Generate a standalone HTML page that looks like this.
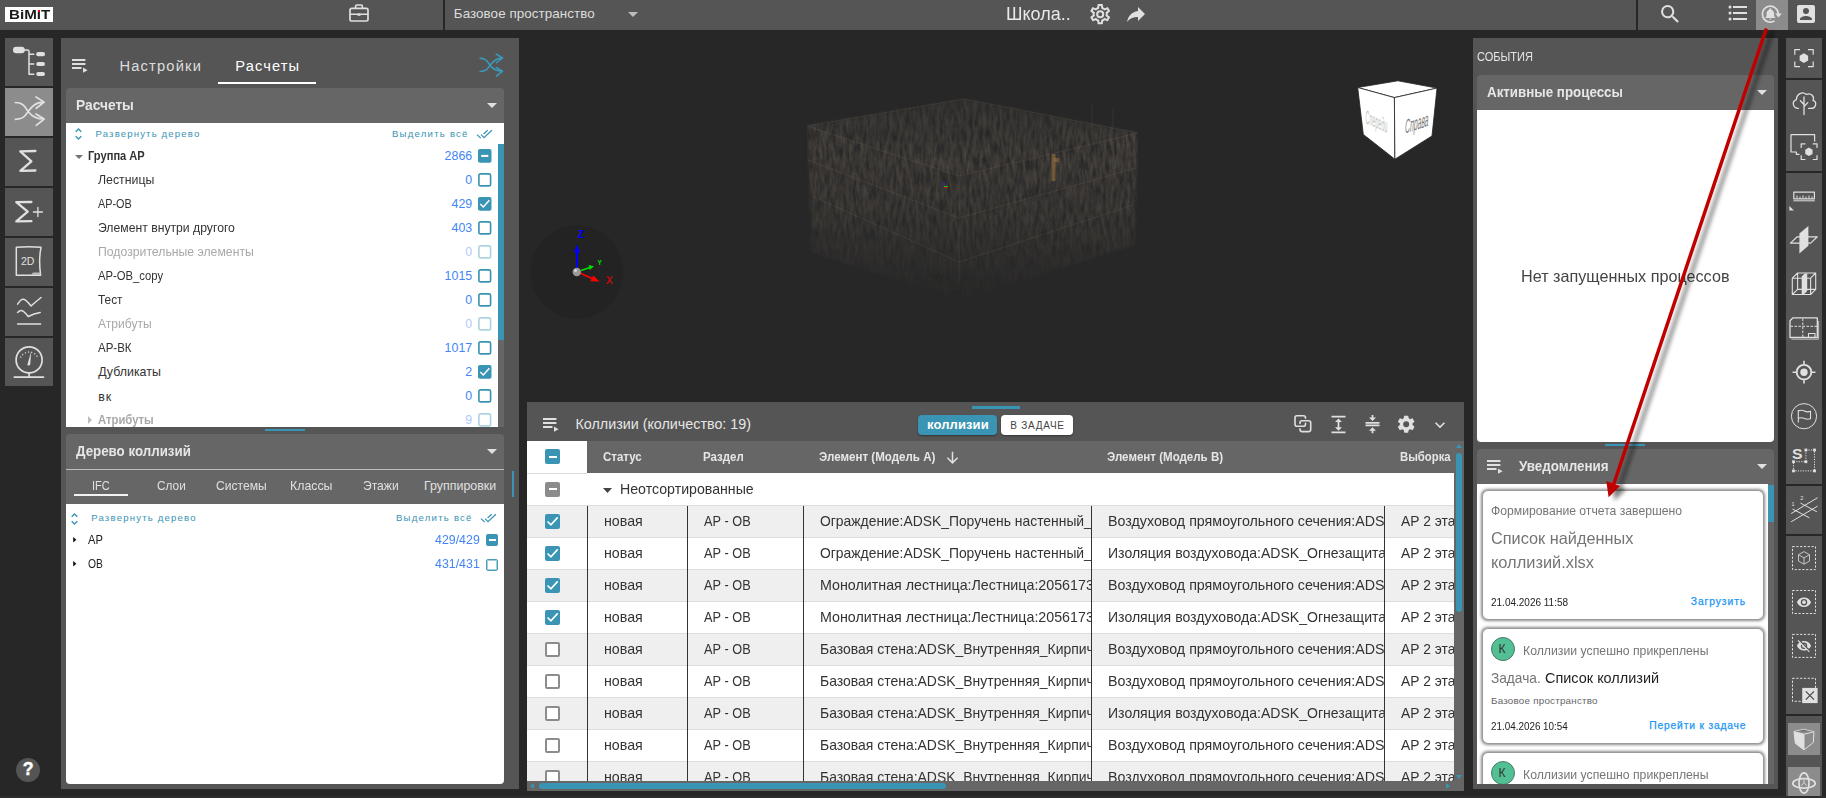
<!DOCTYPE html>
<html lang="ru">
<head>
<meta charset="utf-8">
<title>BIMIT</title>
<style>
*{box-sizing:border-box;margin:0;padding:0}
html,body{width:1826px;height:798px;overflow:hidden;background:#272727}
body{position:relative;font-family:"Liberation Sans",sans-serif;color:#333;font-size:12px}
.a{position:absolute}
.t{position:absolute;white-space:nowrap;line-height:1}
.tc{position:absolute;white-space:nowrap;line-height:1;overflow:hidden}
svg{position:absolute;overflow:visible}
.ic{fill:none;stroke:#e0e0e0;stroke-width:1.6;stroke-linecap:round;stroke-linejoin:round}
.icf{fill:#e0e0e0;stroke:none}
.tri{position:absolute;width:0;height:0;border-left:5px solid transparent;border-right:5px solid transparent;border-top:5px solid #e0e0e0}
.cb{position:absolute;border:2px solid #3a94b3;border-radius:2px;background:#fff}
.cbf{position:absolute;border-radius:2px;background:#3a94b3}
</style>
</head>
<body>
<div class="a" style="left:0px;top:0px;width:1826px;height:30px;background:#555;"></div>
<div class="a" style="left:5px;top:7px;width:48px;height:15px;background:#fff;"></div>
<div class="t" style="left:9.00px;top:9.00px;font-size:12.50px;color:#1a1a1a;font-weight:bold;transform:scaleX(1.2140);transform-origin:0 0;">BiMiT</div>
<div class="a" style="left:38.1px;top:10.1px;width:2.1px;height:2px;background:#f00000;"></div>
<div class="a" style="left:443px;top:0px;width:2px;height:30px;background:#272727;"></div>
<div class="t" style="left:453.80px;top:7.00px;font-size:13.40px;color:#ddd;letter-spacing:0.068px;">Базовое пространство</div>
<div class="tri" style="left:628px;top:12px;border-top-color:#bdbdbd"></div>
<div class="t" style="left:1006.30px;top:5.00px;font-size:18.50px;color:#e8e8e8;transform:scaleX(0.9729);transform-origin:0 0;">Школа..</div>
<div class="a" style="left:1636px;top:0px;width:2px;height:30px;background:#272727;"></div>
<div class="a" style="left:1756px;top:0px;width:32px;height:30px;background:#8c8c8c;"></div>
<div class="a" style="left:0px;top:796px;width:1826px;height:2px;background:#2d2d2d;"></div>
<div class="a" style="left:5px;top:38px;width:48px;height:48px;background:#555;"></div>
<div class="a" style="left:5px;top:88px;width:48px;height:48px;background:#8c8c8c;"></div>
<div class="a" style="left:5px;top:138px;width:48px;height:48px;background:#555;"></div>
<div class="a" style="left:5px;top:188px;width:48px;height:48px;background:#555;"></div>
<div class="a" style="left:5px;top:238px;width:48px;height:48px;background:#555;"></div>
<div class="a" style="left:5px;top:288px;width:48px;height:48px;background:#555;"></div>
<div class="a" style="left:5px;top:338px;width:48px;height:48px;background:#555;"></div>
<div class="a" style="left:16px;top:758px;width:24px;height:24px;border-radius:12px;background:#555"></div>
<div class="t" style="left:22.70px;top:761.00px;font-size:17.80px;color:#fff;font-weight:bold;-webkit-text-stroke:0.4px #fff;">?</div>
<div class="a" style="left:61px;top:38px;width:458px;height:751px;background:#555;"></div>
<svg style="left:72px;top:59px" width="16" height="14" viewBox="0 0 16 14"><path d="M0 1h13.4M0 5h13.4M0 9h9.5" stroke="#e0e0e0" stroke-width="1.8" fill="none"/><path d="M11 8.6v5.2l4.6-2.6z" fill="#e0e0e0"/></svg>
<div class="t" style="left:119.50px;top:59.00px;font-size:14.70px;color:#ddd;letter-spacing:1.165px;">Настройки</div>
<div class="t" style="left:235.30px;top:59.00px;font-size:14.70px;color:#fff;letter-spacing:1.080px;">Расчеты</div>
<div class="a" style="left:218px;top:82px;width:98px;height:2px;background:#fff;"></div>
<div class="a" style="left:66px;top:88px;width:438px;height:35px;background:#666;border-radius:4px 4px 0 0"></div>
<div class="t" style="left:76.00px;top:98.00px;font-size:14.40px;color:#e6e6e6;font-weight:bold;transform:scaleX(0.9556);transform-origin:0 0;">Расчеты</div>
<div class="tri" style="left:487px;top:103px"></div>
<div class="a" style="left:66px;top:123px;width:438px;height:21px;background:#fff;"></div>
<div class="a" style="left:66px;top:144px;width:432px;height:283px;background:#fff;"></div>
<div class="a" style="left:498px;top:144px;width:6px;height:283px;background:#666;"></div>
<div class="a" style="left:498px;top:144px;width:6px;height:196px;background:#3a94b3;"></div>
<div class="t" style="left:95.50px;top:129.00px;font-size:9.60px;color:#3a94b3;letter-spacing:1.143px;">Развернуть дерево</div>
<div class="t" style="left:392.00px;top:129.00px;font-size:9.60px;color:#3a94b3;letter-spacing:1.219px;">Выделить всё</div>
<svg style="left:74px;top:127px" width="9" height="14" viewBox="0 0 9 14"><path d="M1.700 4.700L4.500 2L7.300 4.700M1.700 9.300L4.500 12L7.300 9.300" fill="none" stroke="#3a94b3" stroke-width="1.400"/></svg>
<svg style="left:476px;top:128px" width="16" height="11" viewBox="0 0 16 11"><path d="M1 6.600L4.700 10.100M5 6.600L8 9.600L15.900 2.300M7.600 6L11.700 2.300" fill="none" stroke="#3a94b3" stroke-width="1.250"/></svg>
<div class="a" style="left:66px;top:123px;width:432px;height:304px;overflow:hidden">
<div class="t" style="left:22.20px;top:27.00px;font-size:12.40px;color:#333;font-weight:bold;transform:scaleX(0.8957);transform-origin:0 0;">Группа АР</div>
<div class="t" style="left:378.61px;top:27.00px;font-size:12.40px;color:#4285f4;">2866</div>
<svg style="left:412.4px;top:26px" width="13.500" height="13.800" viewBox="0 0 13.500 13.800"><rect width="13.500" height="13.800" rx="2" fill="#3a94b3"/><rect x="3.200" y="5.900" width="7.100" height="2" fill="#fff"/></svg>
<div class="t" style="left:32.20px;top:51.00px;font-size:12.40px;color:#333;transform:scaleX(0.9947);transform-origin:0 0;">Лестницы</div>
<div class="t" style="left:399.30px;top:51.00px;font-size:12.40px;color:#4285f4;">0</div>
<svg style="left:412.4px;top:50.4px;opacity:1" width="13.500" height="13.800" viewBox="0 0 13.500 13.800"><rect x="0.900" y="0.900" width="11.700" height="12" rx="1.500" fill="#fff" stroke="#3a94b3" stroke-width="1.650"/></svg>
<div class="t" style="left:32.20px;top:75.00px;font-size:12.40px;color:#333;transform:scaleX(0.8759);transform-origin:0 0;">АР-ОВ</div>
<div class="t" style="left:385.51px;top:75.00px;font-size:12.40px;color:#4285f4;">429</div>
<svg style="left:412.4px;top:74.4px" width="13.500" height="13.800" viewBox="0 0 13.500 13.800"><rect width="13.500" height="13.800" rx="2" fill="#3a94b3"/><path d="M2.300 7L5.300 10L11.400 3.300" fill="none" stroke="#fff" stroke-width="1.450"/></svg>
<div class="t" style="left:32.20px;top:99.00px;font-size:12.40px;color:#333;transform:scaleX(0.9849);transform-origin:0 0;">Элемент внутри другого</div>
<div class="t" style="left:385.51px;top:99.00px;font-size:12.40px;color:#4285f4;">403</div>
<svg style="left:412.4px;top:98.4px;opacity:1" width="13.500" height="13.800" viewBox="0 0 13.500 13.800"><rect x="0.900" y="0.900" width="11.700" height="12" rx="1.500" fill="#fff" stroke="#3a94b3" stroke-width="1.650"/></svg>
<div class="t" style="left:32.20px;top:123.00px;font-size:12.40px;color:#a8a8a8;transform:scaleX(0.9873);transform-origin:0 0;">Подозрительные элементы</div>
<div class="t" style="left:399.30px;top:123.00px;font-size:12.40px;color:#aecbfa;">0</div>
<svg style="left:412.4px;top:122.4px;opacity:0.4" width="13.500" height="13.800" viewBox="0 0 13.500 13.800"><rect x="0.900" y="0.900" width="11.700" height="12" rx="1.500" fill="#fff" stroke="#3a94b3" stroke-width="1.650"/></svg>
<div class="t" style="left:32.20px;top:147.00px;font-size:12.40px;color:#333;transform:scaleX(0.9083);transform-origin:0 0;">АР-ОВ_copy</div>
<div class="t" style="left:378.61px;top:147.00px;font-size:12.40px;color:#4285f4;">1015</div>
<svg style="left:412.4px;top:146.4px;opacity:1" width="13.500" height="13.800" viewBox="0 0 13.500 13.800"><rect x="0.900" y="0.900" width="11.700" height="12" rx="1.500" fill="#fff" stroke="#3a94b3" stroke-width="1.650"/></svg>
<div class="t" style="left:32.20px;top:171.00px;font-size:12.40px;color:#333;transform:scaleX(0.9550);transform-origin:0 0;">Тест</div>
<div class="t" style="left:399.30px;top:171.00px;font-size:12.40px;color:#4285f4;">0</div>
<svg style="left:412.4px;top:170.4px;opacity:1" width="13.500" height="13.800" viewBox="0 0 13.500 13.800"><rect x="0.900" y="0.900" width="11.700" height="12" rx="1.500" fill="#fff" stroke="#3a94b3" stroke-width="1.650"/></svg>
<div class="t" style="left:32.20px;top:195.00px;font-size:12.40px;color:#a8a8a8;transform:scaleX(0.9742);transform-origin:0 0;">Атрибуты</div>
<div class="t" style="left:399.30px;top:195.00px;font-size:12.40px;color:#aecbfa;">0</div>
<svg style="left:412.4px;top:194.4px;opacity:0.4" width="13.500" height="13.800" viewBox="0 0 13.500 13.800"><rect x="0.900" y="0.900" width="11.700" height="12" rx="1.500" fill="#fff" stroke="#3a94b3" stroke-width="1.650"/></svg>
<div class="t" style="left:32.20px;top:219.00px;font-size:12.40px;color:#333;transform:scaleX(0.9263);transform-origin:0 0;">АР-ВК</div>
<div class="t" style="left:378.61px;top:219.00px;font-size:12.40px;color:#4285f4;">1017</div>
<svg style="left:412.4px;top:218.4px;opacity:1" width="13.500" height="13.800" viewBox="0 0 13.500 13.800"><rect x="0.900" y="0.900" width="11.700" height="12" rx="1.500" fill="#fff" stroke="#3a94b3" stroke-width="1.650"/></svg>
<div class="t" style="left:32.20px;top:243.00px;font-size:12.40px;color:#333;letter-spacing:0.009px;">Дубликаты</div>
<div class="t" style="left:399.30px;top:243.00px;font-size:12.40px;color:#4285f4;">2</div>
<svg style="left:412.4px;top:242.4px" width="13.500" height="13.800" viewBox="0 0 13.500 13.800"><rect width="13.500" height="13.800" rx="2" fill="#3a94b3"/><path d="M2.300 7L5.300 10L11.400 3.300" fill="none" stroke="#fff" stroke-width="1.450"/></svg>
<div class="t" style="left:32.20px;top:268.00px;font-size:12.40px;color:#333;letter-spacing:1.087px;">вк</div>
<div class="t" style="left:399.30px;top:267.00px;font-size:12.40px;color:#4285f4;">0</div>
<svg style="left:412.4px;top:266.4px;opacity:1" width="13.500" height="13.800" viewBox="0 0 13.500 13.800"><rect x="0.900" y="0.900" width="11.700" height="12" rx="1.500" fill="#fff" stroke="#3a94b3" stroke-width="1.650"/></svg>
<div class="t" style="left:32.20px;top:291.00px;font-size:12.40px;color:#a8a8a8;font-weight:bold;transform:scaleX(0.9108);transform-origin:0 0;">Атрибуты</div>
<div class="t" style="left:399.30px;top:291.00px;font-size:12.40px;color:#aecbfa;">9</div>
<svg style="left:412.4px;top:290.4px;opacity:0.4" width="13.500" height="13.800" viewBox="0 0 13.500 13.800"><rect x="0.900" y="0.900" width="11.700" height="12" rx="1.500" fill="#fff" stroke="#3a94b3" stroke-width="1.650"/></svg>
<svg style="left:8.8px;top:31.5px" width="8" height="4" viewBox="0 0 8 4"><path d="M0 0h8l-4 4z" fill="#757575"/></svg>
<svg style="left:21.5px;top:293px" width="4" height="8" viewBox="0 0 4 8"><path d="M0 0v8l4-4z" fill="#bdbdbd"/></svg>
</div>
<div class="a" style="left:265px;top:429px;width:40px;height:2px;background:#3a94b3;"></div>
<div class="a" style="left:66px;top:434px;width:438px;height:35px;background:#666;border-radius:4px 4px 0 0"></div>
<div class="t" style="left:76.00px;top:444.00px;font-size:14.40px;color:#e6e6e6;font-weight:bold;transform:scaleX(0.9253);transform-origin:0 0;">Дерево коллизий</div>
<div class="tri" style="left:487px;top:449px"></div>
<div class="a" style="left:66px;top:469px;width:438px;height:1px;background:#bdbdbd;"></div>
<div class="a" style="left:66px;top:470px;width:438px;height:34px;background:#666;"></div>
<div class="t" style="left:92.00px;top:480.00px;font-size:12.40px;color:#e0e0e0;transform:scaleX(0.8861);transform-origin:0 0;">IFC</div>
<div class="t" style="left:156.70px;top:480.00px;font-size:12.40px;color:#e0e0e0;transform:scaleX(0.9551);transform-origin:0 0;">Слои</div>
<div class="t" style="left:215.70px;top:480.00px;font-size:12.40px;color:#e0e0e0;transform:scaleX(0.9758);transform-origin:0 0;">Системы</div>
<div class="t" style="left:289.70px;top:480.00px;font-size:12.40px;color:#e0e0e0;transform:scaleX(0.9961);transform-origin:0 0;">Классы</div>
<div class="t" style="left:363.20px;top:480.00px;font-size:12.40px;color:#e0e0e0;transform:scaleX(0.9762);transform-origin:0 0;">Этажи</div>
<div class="t" style="left:423.90px;top:480.00px;font-size:12.40px;color:#e0e0e0;letter-spacing:0.034px;">Группировки</div>
<div class="a" style="left:74px;top:494px;width:54px;height:2px;background:#f2f2f2;"></div>
<div class="a" style="left:512px;top:471px;width:2px;height:26px;background:#3a94b3;"></div>
<div class="a" style="left:66px;top:504px;width:438px;height:280px;background:#fff;border-radius:0 0 4px 4px"></div>
<div class="t" style="left:91.20px;top:513.00px;font-size:9.60px;color:#3a94b3;letter-spacing:1.187px;">Развернуть дерево</div>
<div class="t" style="left:396.00px;top:513.00px;font-size:9.60px;color:#3a94b3;letter-spacing:1.219px;">Выделить всё</div>
<svg style="left:69.5px;top:511.5px" width="9" height="14" viewBox="0 0 9 14"><path d="M1.700 4.700L4.500 2L7.300 4.700M1.700 9.300L4.500 12L7.300 9.300" fill="none" stroke="#3a94b3" stroke-width="1.400"/></svg>
<svg style="left:480px;top:511.700px" width="16" height="11" viewBox="0 0 16 11"><path d="M1 6.600L4.700 10.100M5 6.600L8 9.600L15.900 2.300M7.600 6L11.700 2.300" fill="none" stroke="#3a94b3" stroke-width="1.250"/></svg>
<div class="t" style="left:88.30px;top:534.00px;font-size:12.40px;color:#222;transform:scaleX(0.9008);transform-origin:0 0;">АР</div>
<div class="t" style="left:435.00px;top:534.00px;font-size:12.40px;color:#4285f4;transform:scaleX(0.9995);transform-origin:0 0;">429/429</div>
<div class="cbf" style="left:486.3px;top:534.3px;width:12px;height:12px;background:#3a94b3"></div>
<div class="a" style="left:489.069px;top:539.3px;width:6.46154px;height:2px;background:#fff"></div>
<svg style="left:72.700px;top:537.2px" width="3.600" height="5.600" viewBox="0 0 4 7"><path d="M0 0v7l4-3.500z" fill="#111"/></svg>
<div class="t" style="left:88.30px;top:558.00px;font-size:12.40px;color:#222;transform:scaleX(0.8317);transform-origin:0 0;">ОВ</div>
<div class="t" style="left:435.00px;top:558.00px;font-size:12.40px;color:#4285f4;transform:scaleX(0.9995);transform-origin:0 0;">431/431</div>
<div class="a" style="left:486.300px;top:558.5px;width:12px;height:12px;border:1px solid #4a9cb8;border-radius:2px;box-shadow:inset 0 0 0 1px rgba(58,148,179,.45)"></div>
<svg style="left:72.700px;top:561.4px" width="3.600" height="5.600" viewBox="0 0 4 7"><path d="M0 0v7l4-3.500z" fill="#111"/></svg>
<div class="a" style="left:527px;top:402px;width:937px;height:389px;background:#555;"></div>
<div class="a" style="left:972px;top:406px;width:48px;height:3px;background:#3a94b3;"></div>
<svg style="left:543px;top:418px" width="16" height="14" viewBox="0 0 16 14"><path d="M0 1h13.4M0 5h13.4M0 9h9.5" stroke="#e0e0e0" stroke-width="1.8" fill="none"/><path d="M11 8.6v5.2l4.6-2.6z" fill="#e0e0e0"/></svg>
<div class="t" style="left:575.50px;top:417.00px;font-size:14.30px;color:#e6e6e6;letter-spacing:0.004px;">Коллизии (количество: 19)</div>
<div class="a" style="left:918px;top:415px;width:79px;height:20px;border-radius:4px;background:#3a94b3;box-shadow:0 1px 2px rgba(0,0,0,.4)"></div>
<div class="t" style="left:927.00px;top:418.00px;font-size:13.00px;color:#fff;font-weight:bold;letter-spacing:0.113px;">коллизии</div>
<div class="a" style="left:1001px;top:415px;width:72px;height:20px;border-radius:4px;background:#fff;box-shadow:0 1px 2px rgba(0,0,0,.4)"></div>
<div class="t" style="left:1010.30px;top:421.00px;font-size:10.00px;color:#444;letter-spacing:0.745px;">В ЗАДАЧЕ</div>
<div class="a" style="left:527px;top:441px;width:60px;height:32px;background:#fff;"></div>
<div class="a" style="left:587px;top:441px;width:867px;height:32px;background:#666;"></div>
<div class="a" style="left:1454px;top:441px;width:10px;height:340px;background:#666;"></div>
<div class="cbf" style="left:545.3px;top:449px;width:15px;height:15px;background:#3a94b3"></div>
<div class="a" style="left:548.762px;top:455.5px;width:8.07692px;height:2px;background:#fff"></div>
<div class="t" style="left:602.80px;top:451.00px;font-size:12.40px;color:#e6e6e6;font-weight:bold;transform:scaleX(0.9261);transform-origin:0 0;">Статус</div>
<div class="t" style="left:703.20px;top:451.00px;font-size:12.40px;color:#e6e6e6;font-weight:bold;transform:scaleX(0.9280);transform-origin:0 0;">Раздел</div>
<div class="t" style="left:818.90px;top:451.00px;font-size:12.40px;color:#e6e6e6;font-weight:bold;transform:scaleX(0.9342);transform-origin:0 0;">Элемент (Модель А)</div>
<div class="t" style="left:1106.80px;top:451.00px;font-size:12.40px;color:#e6e6e6;font-weight:bold;transform:scaleX(0.9318);transform-origin:0 0;">Элемент (Модель В)</div>
<div class="t" style="left:1400.30px;top:451.00px;font-size:12.40px;color:#e6e6e6;font-weight:bold;transform:scaleX(0.9143);transform-origin:0 0;">Выборка</div>
<svg style="left:946px;top:451px" width="13" height="13" viewBox="0 0 13 13"><path d="M6.5 0.8v11M1.4 6.8l5.1 5.1 5.1-5.1" fill="none" stroke="#e0e0e0" stroke-width="1.5"/></svg>
<div class="a" style="left:527px;top:473px;width:927px;height:308px;overflow:hidden;background:#fff">
<div class="a" style="left:0px;top:0px;width:60px;height:1px;background:#ddd;"></div>
<div class="a" style="left:0px;top:32px;width:927px;height:1px;background:#ddd;"></div>
<div class="cbf" style="left:18.3px;top:8.5px;width:15px;height:15px;background:#8c8c8c"></div>
<div class="a" style="left:21.7615px;top:15px;width:8.07692px;height:2px;background:#fff"></div>
<svg style="left:75.5px;top:15px" width="9" height="5" viewBox="0 0 9 5"><path d="M0 0h9l-4.5 5z" fill="#444"/></svg>
<div class="t" style="left:92.60px;top:9.00px;font-size:14.40px;color:#333;transform:scaleX(0.9837);transform-origin:0 0;">Неотсортированные</div>
<div class="a" style="left:0px;top:33px;width:927px;height:32px;background:#efefef;border-bottom:1px solid #ddd"></div>
<div class="cbf" style="left:18.3px;top:40.5px;width:15px;height:15px;background:#3a94b3"></div>
<svg style="left:18.3px;top:40.5px" width="15" height="15" viewBox="0 0 13 13"><path d="M2.2 6.5 L5.1 9.4 L11 2.9" fill="none" stroke="#fff" stroke-width="1.4"/></svg>
<div class="t" style="left:76.80px;top:41.00px;font-size:14.40px;color:#333;transform:scaleX(0.9884);transform-origin:0 0;">новая</div>
<div class="t" style="left:176.70px;top:41.00px;font-size:14.40px;color:#333;transform:scaleX(0.8843);transform-origin:0 0;">АР - ОВ</div>
<div class="a" style="left:277px;top:32px;width:287px;height:32px;overflow:hidden">
<div class="t" style="left:15.50px;top:9.00px;font-size:14.40px;color:#333;transform:scaleX(0.9645);transform-origin:0 0;">Ограждение:ADSK_Поручень настенный_Д</div>
</div>
<div class="a" style="left:565px;top:32px;width:292px;height:32px;overflow:hidden">
<div class="t" style="left:15.70px;top:9.00px;font-size:14.40px;color:#333;transform:scaleX(0.9905);transform-origin:0 0;">Воздуховод прямоугольного сечения:ADSK</div>
</div>
<div class="t" style="left:874.00px;top:41.00px;font-size:14.40px;color:#333;transform:scaleX(0.9613);transform-origin:0 0;">АР 2 этаж</div>
<div class="a" style="left:0px;top:65px;width:927px;height:32px;background:#fff;border-bottom:1px solid #ddd"></div>
<div class="cbf" style="left:18.3px;top:72.5px;width:15px;height:15px;background:#3a94b3"></div>
<svg style="left:18.3px;top:72.5px" width="15" height="15" viewBox="0 0 13 13"><path d="M2.2 6.5 L5.1 9.4 L11 2.9" fill="none" stroke="#fff" stroke-width="1.4"/></svg>
<div class="t" style="left:76.80px;top:73.00px;font-size:14.40px;color:#333;transform:scaleX(0.9884);transform-origin:0 0;">новая</div>
<div class="t" style="left:176.70px;top:73.00px;font-size:14.40px;color:#333;transform:scaleX(0.8843);transform-origin:0 0;">АР - ОВ</div>
<div class="a" style="left:277px;top:64px;width:287px;height:32px;overflow:hidden">
<div class="t" style="left:15.50px;top:9.00px;font-size:14.40px;color:#333;transform:scaleX(0.9645);transform-origin:0 0;">Ограждение:ADSK_Поручень настенный_Д</div>
</div>
<div class="a" style="left:565px;top:64px;width:292px;height:32px;overflow:hidden">
<div class="t" style="left:15.70px;top:9.00px;font-size:14.40px;color:#333;transform:scaleX(0.9768);transform-origin:0 0;">Изоляция воздуховода:ADSK_Огнезащита_</div>
</div>
<div class="t" style="left:874.00px;top:73.00px;font-size:14.40px;color:#333;transform:scaleX(0.9613);transform-origin:0 0;">АР 2 этаж</div>
<div class="a" style="left:0px;top:97px;width:927px;height:32px;background:#efefef;border-bottom:1px solid #ddd"></div>
<div class="cbf" style="left:18.3px;top:104.5px;width:15px;height:15px;background:#3a94b3"></div>
<svg style="left:18.3px;top:104.5px" width="15" height="15" viewBox="0 0 13 13"><path d="M2.2 6.5 L5.1 9.4 L11 2.9" fill="none" stroke="#fff" stroke-width="1.4"/></svg>
<div class="t" style="left:76.80px;top:105.00px;font-size:14.40px;color:#333;transform:scaleX(0.9884);transform-origin:0 0;">новая</div>
<div class="t" style="left:176.70px;top:105.00px;font-size:14.40px;color:#333;transform:scaleX(0.8843);transform-origin:0 0;">АР - ОВ</div>
<div class="a" style="left:277px;top:96px;width:287px;height:32px;overflow:hidden">
<div class="t" style="left:15.50px;top:9.00px;font-size:14.40px;color:#333;transform:scaleX(0.9905);transform-origin:0 0;">Монолитная лестница:Лестница:20561739</div>
</div>
<div class="a" style="left:565px;top:96px;width:292px;height:32px;overflow:hidden">
<div class="t" style="left:15.70px;top:9.00px;font-size:14.40px;color:#333;transform:scaleX(0.9905);transform-origin:0 0;">Воздуховод прямоугольного сечения:ADSK</div>
</div>
<div class="t" style="left:874.00px;top:105.00px;font-size:14.40px;color:#333;transform:scaleX(0.9613);transform-origin:0 0;">АР 2 этаж</div>
<div class="a" style="left:0px;top:129px;width:927px;height:32px;background:#fff;border-bottom:1px solid #ddd"></div>
<div class="cbf" style="left:18.3px;top:136.5px;width:15px;height:15px;background:#3a94b3"></div>
<svg style="left:18.3px;top:136.5px" width="15" height="15" viewBox="0 0 13 13"><path d="M2.2 6.5 L5.1 9.4 L11 2.9" fill="none" stroke="#fff" stroke-width="1.4"/></svg>
<div class="t" style="left:76.80px;top:137.00px;font-size:14.40px;color:#333;transform:scaleX(0.9884);transform-origin:0 0;">новая</div>
<div class="t" style="left:176.70px;top:137.00px;font-size:14.40px;color:#333;transform:scaleX(0.8843);transform-origin:0 0;">АР - ОВ</div>
<div class="a" style="left:277px;top:128px;width:287px;height:32px;overflow:hidden">
<div class="t" style="left:15.50px;top:9.00px;font-size:14.40px;color:#333;transform:scaleX(0.9905);transform-origin:0 0;">Монолитная лестница:Лестница:20561739</div>
</div>
<div class="a" style="left:565px;top:128px;width:292px;height:32px;overflow:hidden">
<div class="t" style="left:15.70px;top:9.00px;font-size:14.40px;color:#333;transform:scaleX(0.9768);transform-origin:0 0;">Изоляция воздуховода:ADSK_Огнезащита_</div>
</div>
<div class="t" style="left:874.00px;top:137.00px;font-size:14.40px;color:#333;transform:scaleX(0.9613);transform-origin:0 0;">АР 2 этаж</div>
<div class="a" style="left:0px;top:161px;width:927px;height:32px;background:#efefef;border-bottom:1px solid #ddd"></div>
<div class="cb" style="left:18.3px;top:168.5px;width:15px;height:15px;border-color:#8c8c8c;opacity:1"></div>
<div class="t" style="left:76.80px;top:169.00px;font-size:14.40px;color:#333;transform:scaleX(0.9884);transform-origin:0 0;">новая</div>
<div class="t" style="left:176.70px;top:169.00px;font-size:14.40px;color:#333;transform:scaleX(0.8843);transform-origin:0 0;">АР - ОВ</div>
<div class="a" style="left:277px;top:160px;width:287px;height:32px;overflow:hidden">
<div class="t" style="left:15.50px;top:9.00px;font-size:14.40px;color:#333;transform:scaleX(0.9698);transform-origin:0 0;">Базовая стена:ADSK_Внутренняя_Кирпичн</div>
</div>
<div class="a" style="left:565px;top:160px;width:292px;height:32px;overflow:hidden">
<div class="t" style="left:15.70px;top:9.00px;font-size:14.40px;color:#333;transform:scaleX(0.9905);transform-origin:0 0;">Воздуховод прямоугольного сечения:ADSK</div>
</div>
<div class="t" style="left:874.00px;top:169.00px;font-size:14.40px;color:#333;transform:scaleX(0.9613);transform-origin:0 0;">АР 2 этаж</div>
<div class="a" style="left:0px;top:193px;width:927px;height:32px;background:#fff;border-bottom:1px solid #ddd"></div>
<div class="cb" style="left:18.3px;top:200.5px;width:15px;height:15px;border-color:#8c8c8c;opacity:1"></div>
<div class="t" style="left:76.80px;top:201.00px;font-size:14.40px;color:#333;transform:scaleX(0.9884);transform-origin:0 0;">новая</div>
<div class="t" style="left:176.70px;top:201.00px;font-size:14.40px;color:#333;transform:scaleX(0.8843);transform-origin:0 0;">АР - ОВ</div>
<div class="a" style="left:277px;top:192px;width:287px;height:32px;overflow:hidden">
<div class="t" style="left:15.50px;top:9.00px;font-size:14.40px;color:#333;transform:scaleX(0.9698);transform-origin:0 0;">Базовая стена:ADSK_Внутренняя_Кирпичн</div>
</div>
<div class="a" style="left:565px;top:192px;width:292px;height:32px;overflow:hidden">
<div class="t" style="left:15.70px;top:9.00px;font-size:14.40px;color:#333;transform:scaleX(0.9905);transform-origin:0 0;">Воздуховод прямоугольного сечения:ADSK</div>
</div>
<div class="t" style="left:874.00px;top:201.00px;font-size:14.40px;color:#333;transform:scaleX(0.9613);transform-origin:0 0;">АР 2 этаж</div>
<div class="a" style="left:0px;top:225px;width:927px;height:32px;background:#efefef;border-bottom:1px solid #ddd"></div>
<div class="cb" style="left:18.3px;top:232.5px;width:15px;height:15px;border-color:#8c8c8c;opacity:1"></div>
<div class="t" style="left:76.80px;top:233.00px;font-size:14.40px;color:#333;transform:scaleX(0.9884);transform-origin:0 0;">новая</div>
<div class="t" style="left:176.70px;top:233.00px;font-size:14.40px;color:#333;transform:scaleX(0.8843);transform-origin:0 0;">АР - ОВ</div>
<div class="a" style="left:277px;top:224px;width:287px;height:32px;overflow:hidden">
<div class="t" style="left:15.50px;top:9.00px;font-size:14.40px;color:#333;transform:scaleX(0.9698);transform-origin:0 0;">Базовая стена:ADSK_Внутренняя_Кирпичн</div>
</div>
<div class="a" style="left:565px;top:224px;width:292px;height:32px;overflow:hidden">
<div class="t" style="left:15.70px;top:9.00px;font-size:14.40px;color:#333;transform:scaleX(0.9768);transform-origin:0 0;">Изоляция воздуховода:ADSK_Огнезащита_</div>
</div>
<div class="t" style="left:874.00px;top:233.00px;font-size:14.40px;color:#333;transform:scaleX(0.9613);transform-origin:0 0;">АР 2 этаж</div>
<div class="a" style="left:0px;top:257px;width:927px;height:32px;background:#fff;border-bottom:1px solid #ddd"></div>
<div class="cb" style="left:18.3px;top:264.5px;width:15px;height:15px;border-color:#8c8c8c;opacity:1"></div>
<div class="t" style="left:76.80px;top:265.00px;font-size:14.40px;color:#333;transform:scaleX(0.9884);transform-origin:0 0;">новая</div>
<div class="t" style="left:176.70px;top:265.00px;font-size:14.40px;color:#333;transform:scaleX(0.8843);transform-origin:0 0;">АР - ОВ</div>
<div class="a" style="left:277px;top:256px;width:287px;height:32px;overflow:hidden">
<div class="t" style="left:15.50px;top:9.00px;font-size:14.40px;color:#333;transform:scaleX(0.9698);transform-origin:0 0;">Базовая стена:ADSK_Внутренняя_Кирпичн</div>
</div>
<div class="a" style="left:565px;top:256px;width:292px;height:32px;overflow:hidden">
<div class="t" style="left:15.70px;top:9.00px;font-size:14.40px;color:#333;transform:scaleX(0.9905);transform-origin:0 0;">Воздуховод прямоугольного сечения:ADSK</div>
</div>
<div class="t" style="left:874.00px;top:265.00px;font-size:14.40px;color:#333;transform:scaleX(0.9613);transform-origin:0 0;">АР 2 этаж</div>
<div class="a" style="left:0px;top:289px;width:927px;height:32px;background:#efefef;border-bottom:1px solid #ddd"></div>
<div class="cb" style="left:18.3px;top:296.5px;width:15px;height:15px;border-color:#8c8c8c;opacity:1"></div>
<div class="t" style="left:76.80px;top:297.00px;font-size:14.40px;color:#333;transform:scaleX(0.9884);transform-origin:0 0;">новая</div>
<div class="t" style="left:176.70px;top:297.00px;font-size:14.40px;color:#333;transform:scaleX(0.8843);transform-origin:0 0;">АР - ОВ</div>
<div class="a" style="left:277px;top:288px;width:287px;height:32px;overflow:hidden">
<div class="t" style="left:15.50px;top:9.00px;font-size:14.40px;color:#333;transform:scaleX(0.9698);transform-origin:0 0;">Базовая стена:ADSK_Внутренняя_Кирпичн</div>
</div>
<div class="a" style="left:565px;top:288px;width:292px;height:32px;overflow:hidden">
<div class="t" style="left:15.70px;top:9.00px;font-size:14.40px;color:#333;transform:scaleX(0.9905);transform-origin:0 0;">Воздуховод прямоугольного сечения:ADSK</div>
</div>
<div class="t" style="left:874.00px;top:297.00px;font-size:14.40px;color:#333;transform:scaleX(0.9613);transform-origin:0 0;">АР 2 этаж</div>
<div class="a" style="left:60px;top:33px;width:1px;height:300px;background:#333;"></div>
<div class="a" style="left:160px;top:33px;width:1px;height:300px;background:#333;"></div>
<div class="a" style="left:276px;top:33px;width:1px;height:300px;background:#333;"></div>
<div class="a" style="left:564px;top:33px;width:1px;height:300px;background:#333;"></div>
<div class="a" style="left:857px;top:33px;width:1px;height:300px;background:#333;"></div>
</div>
<svg style="left:1456px;top:444px" width="6" height="4" viewBox="0 0 6 4"><path d="M0 4h6l-3-4z" fill="#3a94b3"/></svg>
<div class="a" style="left:1456px;top:453px;width:6px;height:159px;border-radius:3px;background:#3a94b3"></div>
<svg style="left:1456px;top:775px" width="6" height="4" viewBox="0 0 6 4"><path d="M0 0h6l-3 4z" fill="#3a94b3"/></svg>
<div class="a" style="left:527px;top:781px;width:937px;height:10px;background:#666;"></div>
<div class="a" style="left:539px;top:783px;width:407px;height:6px;border-radius:3px;background:#3a94b3"></div>
<svg style="left:530px;top:783px" width="4" height="6" viewBox="0 0 4 6"><path d="M4 0v6l-4-3z" fill="#3a94b3"/></svg>
<svg style="left:1446px;top:783px" width="4" height="6" viewBox="0 0 4 6"><path d="M0 0v6l4-3z" fill="#3a94b3"/></svg>
<div class="a" style="left:1473px;top:38px;width:305px;height:751px;background:#555;"></div>
<div class="t" style="left:1477.00px;top:51.00px;font-size:12.40px;color:#e6e6e6;transform:scaleX(0.8905);transform-origin:0 0;">СОБЫТИЯ</div>
<div class="a" style="left:1477px;top:75px;width:297px;height:35px;background:#666;border-radius:4px 4px 0 0"></div>
<div class="t" style="left:1487.00px;top:85.00px;font-size:14.40px;color:#e6e6e6;font-weight:bold;transform:scaleX(0.9274);transform-origin:0 0;">Активные процессы</div>
<div class="tri" style="left:1757px;top:90px"></div>
<div class="a" style="left:1477px;top:110px;width:297px;height:332px;background:#fff;border-radius:0 0 4px 4px"></div>
<div class="t" style="left:1521.00px;top:268.00px;font-size:16.50px;color:#444;transform:scaleX(0.9814);transform-origin:0 0;">Нет запущенных процессов</div>
<div class="a" style="left:1605px;top:444px;width:40px;height:2px;background:#3a94b3;"></div>
<div class="a" style="left:1477px;top:449px;width:297px;height:35px;background:#666;border-radius:4px 4px 0 0"></div>
<svg style="left:1487px;top:460px" width="16" height="14" viewBox="0 0 16 14"><path d="M0 1h13.4M0 5h13.4M0 9h9.5" stroke="#e0e0e0" stroke-width="1.8" fill="none"/><path d="M11 8.6v5.2l4.6-2.6z" fill="#e0e0e0"/></svg>
<div class="t" style="left:1519.30px;top:459.00px;font-size:14.40px;color:#e6e6e6;font-weight:bold;transform:scaleX(0.9305);transform-origin:0 0;">Уведомления</div>
<div class="tri" style="left:1757px;top:464px"></div>
<div class="a" style="left:1477px;top:484px;width:291px;height:300px;overflow:hidden;background:#fff">
<div class="a" style="left:6px;top:7px;width:280px;height:128px;border-radius:5px;background:#fff;box-shadow:0 0 3px 1.5px #8a8a8a"></div>
<div class="t" style="left:14.00px;top:21.00px;font-size:12.40px;color:#757575;transform:scaleX(0.9832);transform-origin:0 0;">Формирование отчета завершено</div>
<div class="t" style="left:14.00px;top:46.00px;font-size:16.50px;color:#757575;transform:scaleX(0.9873);transform-origin:0 0;">Список найденных</div>
<div class="t" style="left:14.00px;top:70.00px;font-size:16.50px;color:#757575;transform:scaleX(0.9934);transform-origin:0 0;">коллизий.xlsx</div>
<div class="t" style="left:14.00px;top:113.00px;font-size:10.70px;color:#222;transform:scaleX(0.9345);transform-origin:0 0;">21.04.2026 11:58</div>
<div class="t" style="left:213.80px;top:113.00px;font-size:10.30px;color:#2196f3;letter-spacing:0.921px;-webkit-text-stroke:0.25px #2196f3;">Загрузить</div>
<div class="a" style="left:6px;top:145px;width:280px;height:114px;border-radius:5px;background:#fff;box-shadow:0 0 3px 1.5px #8a8a8a"></div>
<div class="a" style="left:13.8px;top:153px;width:24px;height:24px;border-radius:12px;background:#52c094;border:1px solid #4a7a68"></div>
<div class="t" style="left:21.60px;top:159.00px;font-size:12.00px;color:#333;">К</div>
<div class="t" style="left:45.80px;top:161.00px;font-size:12.40px;color:#757575;transform:scaleX(0.9893);transform-origin:0 0;">Коллизии успешно прикреплены</div>
<div class="t" style="left:14.00px;top:187.00px;font-size:14.80px;color:#757575;transform:scaleX(0.9244);transform-origin:0 0;">Задача.</div>
<div class="t" style="left:67.80px;top:187.00px;font-size:14.80px;color:#222;transform:scaleX(0.9772);transform-origin:0 0;">Список коллизий</div>
<div class="t" style="left:14.00px;top:212.00px;font-size:9.80px;color:#666;letter-spacing:0.233px;">Базовое пространство</div>
<div class="t" style="left:14.00px;top:237.00px;font-size:10.70px;color:#222;transform:scaleX(0.9232);transform-origin:0 0;">21.04.2026 10:54</div>
<div class="t" style="left:172.30px;top:237.00px;font-size:10.30px;color:#2196f3;letter-spacing:0.807px;-webkit-text-stroke:0.25px #2196f3;">Перейти к задаче</div>
<div class="a" style="left:6px;top:269px;width:280px;height:114px;border-radius:5px;background:#fff;box-shadow:0 0 3px 1.5px #8a8a8a"></div>
<div class="a" style="left:13.8px;top:276.8px;width:24px;height:24px;border-radius:12px;background:#52c094;border:1px solid #4a7a68"></div>
<div class="t" style="left:21.60px;top:283.00px;font-size:12.00px;color:#333;">К</div>
<div class="t" style="left:45.80px;top:285.00px;font-size:12.40px;color:#757575;transform:scaleX(0.9893);transform-origin:0 0;">Коллизии успешно прикреплены</div>
</div>
<div class="a" style="left:1768px;top:484px;width:6px;height:300px;background:#666;"></div>
<div class="a" style="left:1768px;top:485px;width:6px;height:37px;background:#3a94b3;"></div>
<div class="a" style="left:1786px;top:38px;width:36px;height:758px;background:#555;"></div>
<div class="a" style="left:1786px;top:78px;width:36px;height:2px;background:#272727;"></div>
<div class="a" style="left:1786px;top:171px;width:36px;height:2px;background:#272727;"></div>
<div class="a" style="left:1786px;top:484px;width:36px;height:2px;background:#272727;"></div>
<div class="a" style="left:1786px;top:534px;width:36px;height:2px;background:#272727;"></div>
<div class="a" style="left:1786px;top:714px;width:36px;height:2px;background:#272727;"></div>
<div class="a" style="left:1788px;top:723px;width:32px;height:32px;background:#8c8c8c;"></div>
<div class="a" style="left:1788px;top:767px;width:32px;height:29px;background:#8c8c8c;"></div>
<svg style="left:349px;top:4px" width="20" height="18" viewBox="0 0 20 18"><rect x="1" y="4.4" width="18" height="12.6" rx="1.6" fill="none" stroke="#e0e0e0" stroke-width="1.7"/><path d="M6.6 4.2V2.2Q6.6 1 7.8 1h4.4Q13.4 1 13.4 2.2v2" fill="none" stroke="#e0e0e0" stroke-width="1.6"/><path d="M1 10.2h7.6M11.4 10.2H19" stroke="#e0e0e0" stroke-width="1.5"/><rect x="8.4" y="9.2" width="3.2" height="2.6" fill="#e0e0e0"/></svg>
<svg style="left:1087.8px;top:1.8px" width="24.4" height="24.4" viewBox="0 0 24 24"><path d="M12,8A4,4 0 0,1 16,12A4,4 0 0,1 12,16A4,4 0 0,1 8,12A4,4 0 0,1 12,8M12,10A2,2 0 0,0 10,12A2,2 0 0,0 12,14A2,2 0 0,0 14,12A2,2 0 0,0 12,10M10,22C9.75,22 9.54,21.82 9.5,21.58L9.13,18.93C8.5,18.68 7.96,18.34 7.44,17.94L4.95,18.95C4.73,19.03 4.46,18.95 4.34,18.73L2.34,15.27C2.21,15.05 2.27,14.78 2.46,14.63L4.57,12.97L4.5,12L4.57,11L2.46,9.37C2.27,9.22 2.21,8.95 2.34,8.73L4.34,5.27C4.46,5.05 4.73,4.96 4.95,5.05L7.44,6.05C7.96,5.66 8.5,5.32 9.13,5.07L9.5,2.42C9.54,2.18 9.75,2 10,2H14C14.25,2 14.46,2.18 14.5,2.42L14.87,5.07C15.5,5.32 16.04,5.66 16.56,6.05L19.05,5.05C19.27,4.96 19.54,5.05 19.66,5.27L21.66,8.73C21.79,8.95 21.73,9.22 21.54,9.37L19.43,11L19.5,12L19.43,13L21.54,14.63C21.73,14.78 21.79,15.05 21.66,15.27L19.66,18.73C19.54,18.95 19.27,19.04 19.05,18.95L16.56,17.95C16.04,18.34 15.5,18.68 14.87,18.93L14.5,21.58C14.46,21.82 14.25,22 14,22H10M11.25,4L10.88,6.61C9.68,6.86 8.62,7.5 7.85,8.39L5.44,7.35L4.69,8.65L6.8,10.2C6.4,11.37 6.4,12.64 6.8,13.8L4.68,15.36L5.43,16.66L7.86,15.62C8.63,16.5 9.68,17.14 10.87,17.38L11.24,20H12.76L13.13,17.39C14.32,17.14 15.37,16.5 16.14,15.62L18.57,16.66L19.32,15.36L17.2,13.81C17.6,12.64 17.6,11.37 17.2,10.2L19.31,8.65L18.56,7.35L16.15,8.39C15.38,7.5 14.32,6.86 13.12,6.62L12.75,4H11.25Z" fill="#e0e0e0"/></svg>
<svg style="left:1124px;top:1.5px" width="24" height="24" viewBox="0 0 24 24"><path d="M21,12L14,5V9C7,10 4,15 3,20C5.5,16.5 9,14.9 14,14.9V19L21,12Z" fill="#e0e0e0"/></svg>
<svg style="left:1657.6px;top:1.6px" width="24.4" height="24.4" viewBox="0 0 24 24"><path d="M9.5,3A6.5,6.5 0 0,1 16,9.5C16,11.11 15.41,12.59 14.44,13.73L14.71,14H15.5L20.5,19L19,20.5L14,15.5V14.71L13.73,14.44C12.59,15.41 11.11,16 9.5,16A6.5,6.5 0 0,1 3,9.5A6.5,6.5 0 0,1 9.5,3M9.5,5C7,5 5,7 5,9.5C5,12 7,14 9.5,14C12,14 14,12 14,9.5C14,7 12,5 9.5,5Z" fill="#e0e0e0"/></svg>
<svg style="left:1726.4px;top:1.4px" width="24" height="24" viewBox="0 0 24 24"><path d="M7,5H21V7H7V5M7,13V11H21V13H7M4,4.5A1.5,1.5 0 0,1 5.5,6A1.5,1.5 0 0,1 4,7.5A1.5,1.5 0 0,1 2.5,6A1.5,1.5 0 0,1 4,4.5M4,10.5A1.5,1.5 0 0,1 5.5,12A1.5,1.5 0 0,1 4,13.5A1.5,1.5 0 0,1 2.5,12A1.5,1.5 0 0,1 4,10.5M7,19V17H21V19H7M4,16.5A1.5,1.5 0 0,1 5.5,18A1.5,1.5 0 0,1 4,19.5A1.5,1.5 0 0,1 2.5,18A1.5,1.5 0 0,1 4,16.5Z" fill="#e0e0e0"/></svg>
<svg style="left:1794.1px;top:2px" width="24" height="24" viewBox="0 0 24 24"><path d="M6,17C6,15 10,13.9 12,13.9C14,13.9 18,15 18,17V18H6M15,9A3,3 0 0,1 12,12A3,3 0 0,1 9,9A3,3 0 0,1 12,6A3,3 0 0,1 15,9M3,5V19A2,2 0 0,0 5,21H19A2,2 0 0,0 21,19V5A2,2 0 0,0 19,3H5C3.89,3 3,3.9 3,5Z" fill="#e0e0e0"/></svg>
<svg style="left:1761px;top:4px" width="22" height="20" viewBox="0 0 22 20"><path d="M17.3 10.4A8 8 0 1 0 13.6 16.9" fill="none" stroke="#e0e0e0" stroke-width="1.7"/><path d="M14.2 9.6h6.6l-3.3 4z" fill="#e0e0e0"/><path d="M9.3 4.2a1 1 0 0 1 1 1v.5c1.8.5 2.8 2 2.8 3.9v2.6l1.2 1.2v.6H4.300v-.6l1.2-1.2V9.600c0-1.900 1-3.400 2.800-3.900v-.5a1 1 0 0 1 1-1zM8.200 14.800h2.200a1.100 1.100 0 0 1-2.200 0z" fill="#e0e0e0"/></svg>
<svg style="left:0px;top:0px" width="1826" height="798" viewBox="0 0 1826 798"><path d="M1305.500 418.300V417.800Q1305.500 415.800 1303.500 415.800H1297Q1295 415.800 1295 417.800V424.200Q1295 426.200 1297 426.200H1303.500Q1305.500 426.200 1305.500 424.200V423.200M1300 423.500V422.800Q1300 420.800 1302 420.800H1308.700Q1310.700 420.800 1310.700 422.800V429.600Q1310.700 431.600 1308.700 431.600H1302Q1300 431.600 1300 429.600V428.900" fill="none" stroke="#e0e0e0" stroke-width="1.600" stroke-linecap="round"/></svg>
<svg style="left:1327.5px;top:414.25px" width="21" height="21" viewBox="0 0 24 24"><path d="M13,9V15H16L12,19L8,15H11V9H8L12,5L16,9H13M4,2H20V4H4V2M4,20H20V22H4V20Z" fill="#e0e0e0"/></svg>
<svg style="left:1361.5px;top:414.1px" width="21" height="21" viewBox="0 0 24 24"><path d="M4,12H20V14H4V12M4,9H20V11H4V9M16,4L12,8L8,4H11V1H13V4H16M8,19L12,15L16,19H13V22H11V19H8Z" fill="#e0e0e0"/></svg>
<svg style="left:1395.6px;top:413.8px" width="20.4" height="20.4" viewBox="0 0 24 24"><path d="M12,15.5A3.5,3.5 0 0,1 8.5,12A3.5,3.5 0 0,1 12,8.5A3.5,3.5 0 0,1 15.5,12A3.5,3.5 0 0,1 12,15.5M19.43,12.97C19.47,12.65 19.5,12.33 19.5,12C19.5,11.67 19.47,11.34 19.43,11L21.54,9.37C21.73,9.22 21.78,8.95 21.66,8.73L19.66,5.27C19.54,5.05 19.27,4.96 19.05,5.05L16.56,6.05C16.04,5.66 15.5,5.32 14.87,5.07L14.5,2.42C14.46,2.18 14.25,2 14,2H10C9.75,2 9.54,2.18 9.5,2.42L9.13,5.07C8.5,5.32 7.96,5.66 7.44,6.05L4.95,5.05C4.73,4.96 4.46,5.05 4.34,5.27L2.34,8.73C2.21,8.95 2.27,9.22 2.46,9.37L4.57,11C4.53,11.34 4.5,11.67 4.5,12C4.5,12.33 4.53,12.65 4.57,12.97L2.46,14.63C2.27,14.78 2.21,15.05 2.34,15.27L4.34,18.73C4.46,18.95 4.73,19.03 4.95,18.95L7.44,17.94C7.96,18.34 8.5,18.68 9.13,18.93L9.5,21.58C9.54,21.82 9.75,22 10,22H14C14.25,22 14.46,21.82 14.5,21.58L14.87,18.93C15.5,18.67 16.04,18.34 16.56,17.94L19.05,18.95C19.27,19.03 19.54,18.95 19.66,18.73L21.66,15.27C21.78,15.05 21.73,14.78 21.54,14.63L19.43,12.97Z" fill="#e0e0e0"/></svg>
<svg style="left:1430px;top:415px" width="20" height="20" viewBox="0 0 24 24"><path d="M7.41,8.58L12,13.17L16.59,8.58L18,10L12,16L6,10L7.41,8.58Z" fill="#e0e0e0"/></svg>
<svg style="left:5px;top:38px" width="48" height="48" viewBox="0 0 48 48"><rect x="8" y="8.8" width="11.800" height="6.4" rx="3.2" fill="#e0e0e0"/><path d="M19 12h3.400Q24 12 24 13.600V36.200h4.800M24 16.200h4.800M24 26h4.800" fill="none" stroke="#e0e0e0" stroke-linecap="round" stroke-linejoin="round" stroke-width="1.500"/><rect x="31.200" y="14.100" width="8.800" height="4.100" rx="2.050" fill="#e0e0e0"/><rect x="31.200" y="24" width="8.800" height="4.100" rx="2.050" fill="#e0e0e0"/><rect x="31.200" y="33.900" width="8.800" height="4.100" rx="2.050" fill="#e0e0e0"/></svg>
<svg style="left:5px;top:88px" width="48" height="48" viewBox="0 0 48 48"><path d="M10.400 14.500C19 14.500 20.500 20 23.300 23.700S30 31 38.800 31M10.400 31.300C19 31.300 20.500 27 23.300 23.300S30 14.200 38.800 14.200M31 9L39.200 14.100L31.200 20.200M31 26L39.200 31L31.200 37.300" fill="none" stroke="#e0e0e0" stroke-linecap="round" stroke-linejoin="round" stroke-width="1.700"/></svg>
<svg style="left:5px;top:138px" width="48" height="48" viewBox="0 0 48 48"><path d="M30.400 13L15.300 13.400L26.400 23.300L15.300 32.800L30.400 32.500" fill="none" stroke="#e0e0e0" stroke-linecap="round" stroke-linejoin="round" stroke-width="2.300"/></svg>
<svg style="left:5px;top:188px" width="48" height="48" viewBox="0 0 48 48"><path d="M26.400 14L11.300 14.200L22.700 23.700L11.300 33.400L26.400 33.200" fill="none" stroke="#e0e0e0" stroke-linecap="round" stroke-linejoin="round" stroke-width="2.300"/><path d="M28.400 24h9M32.900 19.500v9" fill="none" stroke="#e0e0e0" stroke-linecap="round" stroke-linejoin="round" stroke-width="1.300"/></svg>
<svg style="left:5px;top:238px" width="48" height="48" viewBox="0 0 48 48"><path d="M11.300 9.300Q24 8.300 36 9.300Q33.500 22 35.600 37.200L11.300 37.200Z" fill="none" stroke="#e0e0e0" stroke-linecap="round" stroke-linejoin="round" stroke-width="1.500"/><path d="M26 37l2-2.600h7.400v2.600z" fill="#bdbdbd"/><text x="16" y="27" font-family="Liberation Sans, sans-serif" font-size="10.500" fill="#e0e0e0">2D</text></svg>
<svg style="left:5px;top:288px" width="48" height="48" viewBox="0 0 48 48"><path d="M12.600 16.100Q16 11 18.500 11.300T26 18Q31 13.500 36.100 9.500M12.600 24.500Q15 22 17.200 22.800T23.200 28.500Q29 25.500 35.200 24.500M12.600 36.100H35.600" fill="none" stroke="#e0e0e0" stroke-linecap="round" stroke-linejoin="round" stroke-width="1.500"/></svg>
<svg style="left:5px;top:338px" width="48" height="48" viewBox="0 0 48 48"><circle cx="24.100" cy="21.900" r="13" fill="none" stroke="#e0e0e0" stroke-linecap="round" stroke-linejoin="round" stroke-width="1.700"/><path d="M24.100 35v4M9.300 39.100H38.500" fill="none" stroke="#e0e0e0" stroke-linecap="round" stroke-linejoin="round" stroke-width="1.700"/><path d="M26.100 13.500L25.300 26.600Q23.900 28.300 22.300 26.900Z" fill="#e0e0e0"/><path d="M15.500 19.500A9.500 9.500 0 0 1 32.600 19.300" fill="none" stroke="#e0e0e0" stroke-width="1.400" stroke-dasharray="1 2.200"/></svg>
<svg style="left:1786px;top:38px" width="36" height="760" viewBox="0 0 36 760"><path d="M8.8 16.8V11.6H14 M22 11.6H27.2V16.8 M27.2 23.4V28.6H22 M14 28.6H8.8V23.4" fill="none" stroke="#e0e0e0" stroke-linejoin="round" stroke-width="1.2"/><polygon points="17.90,15.20 22.14,17.65 22.14,22.55 17.90,25.00 13.66,22.55 13.66,17.65" fill="#e0e0e0"/><path d="M12.400 70.400C7 70.400 5.200 63.500 10.400 61.600C10.400 56 16.500 53 20.300 56.400C25 54.500 28.800 58.500 27 62.400C31.500 64 30 70.400 25 70.400H22.500M18 76.500V59M18 66.500L14.400 62.800M18 68.500L21.800 64.600" fill="none" stroke="#e0e0e0" stroke-linejoin="round" stroke-width="1.300" stroke-linecap="round"/><path d="M28.600 103.500V96.700H5V114H10.400V116.400H13.500" fill="none" stroke="#e0e0e0" stroke-linejoin="round" stroke-width="1.200"/><path d="M15.2 110V105.8H19.4 M26.8 105.8H31V110 M31 117.3V121.5H26.8 M19.4 121.5H15.2V117.3" fill="none" stroke="#e0e0e0" stroke-linejoin="round" stroke-width="1.2"/><polygon points="22.90,109.60 26.54,111.70 26.54,115.90 22.90,118.00 19.26,115.90 19.26,111.70" fill="#e0e0e0"/><rect x="7.800" y="154.1" width="20.600" height="6.700" fill="none" stroke="#e0e0e0" stroke-linejoin="round" stroke-width="1.200"/><path d="M11 160.5v-3M14 160.5v-2M17 160.5v-3M20 160.5v-2M23 160.5v-3M26 160.5v-2M7.400 162.8H28.800" fill="none" stroke="#e0e0e0" stroke-linejoin="round" stroke-width="1"/><path d="M3.400 168V172.5H7.900Z" fill="#e0e0e0"/><path d="M4.500 205.1L11.200 198.8H31.300L24.600 205.1Z" fill="none" stroke="#e0e0e0" stroke-linejoin="round" stroke-width="1.200"/><path d="M13.400 195.5L22.400 188.1V207.8L13.400 215.6Z" fill="#e0e0e0"/><path d="M6.300 240.2H24.600V256.5H6.300ZM11.600 235H29.700V251.4H11.600ZM6.300 240.2L11.600 235M24.600 240.2L29.700 235M6.300 256.5L11.600 251.4M24.600 256.5L29.700 251.4" fill="none" stroke="#e0e0e0" stroke-linejoin="round" stroke-width="1.100"/><path d="M15.700 238.5L18.800 235.5H21.200V253L18 256.2H15.700Z" fill="#e0e0e0"/><path d="M7 279.8H31.300V299.5H4V282.8Z" fill="none" stroke="#e0e0e0" stroke-linejoin="round" stroke-width="1.300"/><path d="M16.800 280.5V299M4.500 288.3H31" fill="none" stroke="#e0e0e0" stroke-linejoin="round" stroke-width="1" stroke-dasharray="2.500 1.500"/><path d="M22.500 299.5V295.5H29V299.5" fill="none" stroke="#e0e0e0" stroke-linejoin="round" stroke-width="1.100"/><path d="M5.500 301.2H32.600V283" fill="none" stroke="#bdbdbd" stroke-width="1"/></svg>
<svg style="left:1786px;top:38px" width="36" height="760" viewBox="0 0 36 760"><circle cx="18" cy="334.2" r="7.300" fill="none" stroke="#e0e0e0" stroke-linejoin="round" stroke-width="1.900"/><circle cx="18" cy="334.2" r="3.700" fill="#e0e0e0"/><path d="M18 326.2v-3.400M18 342.2v3.400M10 334.2h-3.400M26 334.2h3.400" fill="none" stroke="#e0e0e0" stroke-linejoin="round" stroke-width="1.600"/><circle cx="18" cy="378.2" r="12.600" fill="none" stroke="#e0e0e0" stroke-linejoin="round" stroke-width="1"/><path d="M12.300 372V384.5M12.300 373Q15.500 371.5 18.400 373T24.500 373.3V380.8Q21.500 381.8 18.400 380.5T12.300 380.3" fill="none" stroke="#e0e0e0" stroke-linejoin="round" stroke-width="1.100"/><text x="6" y="420.7" font-family="Liberation Sans, sans-serif" font-weight="bold" font-size="14.500" fill="#e0e0e0" textLength="10.500" lengthAdjust="spacingAndGlyphs">S</text><path d="M19.900 412H28.500V432.9H7.500V423.7H19.900Z" fill="none" stroke="#e0e0e0" stroke-linejoin="round" stroke-width="1" stroke-dasharray="1.200 1.300"/><rect x="18.5" y="410.6" width="2.800" height="2.800" fill="#e0e0e0"/><rect x="27.1" y="410.6" width="2.800" height="2.800" fill="#e0e0e0"/><rect x="27.1" y="431.5" width="2.800" height="2.800" fill="#e0e0e0"/><rect x="6.1" y="431.5" width="2.800" height="2.800" fill="#e0e0e0"/><rect x="6.1" y="422.3" width="2.800" height="2.800" fill="#e0e0e0"/><rect x="18.5" y="422.3" width="2.800" height="2.800" fill="#e0e0e0"/><path d="M5.100 475.6L31.600 459.7M5.100 483.8L31.600 468.1M6.500 471L23.400 479.8M14.500 465.1L30.900 473.8" fill="none" stroke="#e0e0e0" stroke-linejoin="round" stroke-width="1"/><text x="5.500" y="468.3" font-family="Liberation Sans, sans-serif" font-size="5.500" fill="#e0e0e0">1</text><text x="14.300" y="462.2" font-family="Liberation Sans, sans-serif" font-size="5.500" fill="#e0e0e0">2</text><rect x="6.500" y="508.6" width="23" height="23" fill="none" stroke="#e0e0e0" stroke-linejoin="round" stroke-width="1" stroke-dasharray="2.200 1.600"/><path d="M18 513.6L23.500 516.7V523.1L18 526.2L12.500 523.1V516.7ZM12.500 516.7L18 519.9L23.500 516.7M18 519.9V526.2" fill="none" stroke="#d0d0d0" stroke-width="0.900" stroke-linejoin="round"/><rect x="6.500" y="552.5" width="23" height="23" fill="none" stroke="#e0e0e0" stroke-linejoin="round" stroke-width="1" stroke-dasharray="2.200 1.600"/><g transform="translate(10.32 556.52) scale(0.640)"><path d="M12,9A3,3 0 0,0 9,12A3,3 0 0,0 12,15A3,3 0 0,0 15,12A3,3 0 0,0 12,9M12,17A5,5 0 0,1 7,12A5,5 0 0,1 12,7A5,5 0 0,1 17,12A5,5 0 0,1 12,17M12,4.500C7,4.500 2.730,7.610 1,12C2.730,16.390 7,19.500 12,19.500C17,19.500 21.270,16.390 23,12C21.270,7.610 17,4.500 12,4.500Z" fill="#e0e0e0"/></g><rect x="6.500" y="596.4" width="23" height="23" fill="none" stroke="#e0e0e0" stroke-linejoin="round" stroke-width="1" stroke-dasharray="2.200 1.600"/><g transform="translate(10.32 600.12) scale(0.640)"><path d="M11.830,9L15,12.160C15,12.110 15,12.050 15,12A3,3 0 0,0 12,9C11.940,9 11.890,9 11.830,9M7.530,9.800L9.080,11.350C9.030,11.560 9,11.770 9,12A3,3 0 0,0 12,15C12.220,15 12.440,14.970 12.650,14.920L14.200,16.470C13.530,16.800 12.790,17 12,17A5,5 0 0,1 7,12C7,11.210 7.200,10.470 7.530,9.800M2,4.270L4.280,6.550L4.730,7C3.080,8.300 1.780,10 1,12C2.730,16.390 7,19.500 12,19.500C13.550,19.500 15.030,19.200 16.380,18.660L16.810,19.080L19.730,22L21,20.730L3.270,3M12,7A5,5 0 0,1 17,12C17,12.640 16.870,13.260 16.640,13.820L19.570,16.750C21.070,15.500 22.270,13.860 23,12C21.270,7.610 17,4.500 12,4.500C10.600,4.500 9.260,4.750 8,5.200L10.170,7.350C10.740,7.130 11.350,7 12,7Z" fill="#e0e0e0"/></g><rect x="6.500" y="640.3" width="23" height="23" fill="none" stroke="#e0e0e0" stroke-linejoin="round" stroke-width="1" stroke-dasharray="2.200 1.600"/><rect x="16.200" y="649.9" width="15.400" height="15.200" fill="#e0e0e0"/><path d="M19.800 653.4l8.200 8.200M28 653.4l-8.200 8.200" fill="none" stroke="#444" stroke-width="1.200"/><path d="M8 693.4L18 696.3V711.9L9.300 705.3Z" fill="#e0e0e0" stroke="#e0e0e0" stroke-width="1" stroke-linejoin="round"/><path d="M18 696.3L28 693.6L27.300 704.5L18 711.9" fill="none" stroke="#e0e0e0" stroke-width="1" stroke-linejoin="round"/><path d="M8 693.4L17.500 691.2L28 693.6" fill="#707070" stroke="#d0d0d0" stroke-width="1" stroke-linejoin="round"/><ellipse cx="18" cy="745.4" rx="11.200" ry="4.800" fill="none" stroke="#e0e0e0" stroke-linejoin="round" stroke-width="1.700"/><ellipse cx="18" cy="745" rx="5" ry="10.200" fill="none" stroke="#e0e0e0" stroke-linejoin="round" stroke-width="1.700"/><path d="M18 741.8V744.5L15.300 747.6M18 744.5L20.700 747.6" fill="none" stroke="#e0e0e0" stroke-linejoin="round" stroke-width="0.900"/></svg>
<svg style="left:0px;top:0px" width="1826" height="798" viewBox="0 0 1826 798"><defs><linearGradient id="gl" x1="0" y1="0" x2="0" y2="1"><stop offset="0" stop-color="#776b5e" stop-opacity=".62"/><stop offset=".5" stop-color="#685d52" stop-opacity=".5"/><stop offset="1" stop-color="#5c5044" stop-opacity="0"/></linearGradient><linearGradient id="gt" x1="0" y1="0" x2="0" y2="1"><stop offset="0" stop-color="#776b5e" stop-opacity=".3"/><stop offset="1" stop-color="#776b5e" stop-opacity=".6"/></linearGradient><filter id="nz" x="0" y="0" width="100%" height="100%"><feGaussianBlur in="SourceGraphic" stdDeviation="1.500" result="g"/><feTurbulence type="fractalNoise" baseFrequency="0.300 0.070" numOctaves="4" seed="7" result="n"/><feColorMatrix in="n" type="matrix" values="0 0 0 0 1  0 0 0 0 1  0 0 0 0 1  1.300 0 0 0 -0.250" result="al"/><feComposite in="g" in2="al" operator="in"/></filter></defs><g filter="url(#nz)"><polygon points="807,126 964,99 1138,133 959,176" fill="url(#gt)"/><polygon points="807,126 959,176 959,300 812,252" fill="url(#gl)"/><polygon points="959,176 1138,133 1134,245 959,300" fill="url(#gl)"/></g><path d="M807 126L959 176L1138 133M959 176V282M812 196L959 262L1133 205M808 160L959 218L1136 168M964 99L807 126M964 99L1138 133M1113 108V190M1092 104V140" fill="none" stroke="#8a7866" stroke-width=".8" opacity=".22"/><rect x="1051.500" y="154" width="4" height="27" fill="#a87838" opacity=".5"/><rect x="1054" y="158" width="5" height="4" fill="#a87838" opacity=".45"/><path d="M944 187v-5" stroke="#33f" stroke-width="1" opacity=".8"/><path d="M944 186.500h4" stroke="#0c0" stroke-width="1"/><path d="M944 187.500h3" stroke="#e00" stroke-width="1"/><circle cx="576.800" cy="272" r="46.500" fill="#232323"/><path d="M577 268V250" stroke="#0000ff" stroke-width="2"/><path d="M577 244.600L580 252.500H574Z" fill="#0000ff"/><path d="M581 270.500L590 267.500" stroke="#00e000" stroke-width="1.600"/><path d="M594 266.200L588.500 265L589.700 270Z" fill="#00e000"/><path d="M580 273L592 278.500" stroke="#ff0000" stroke-width="1.800"/><path d="M599.500 281.600L590.300 281.300L593.300 275.500Z" fill="#ff0000"/><circle cx="576.800" cy="272" r="4.200" fill="#9a9a9a"/><circle cx="575.600" cy="270.600" r="1.300" fill="#ddd"/><text x="577.700" y="238" font-family="Liberation Sans, sans-serif" font-weight="bold" font-size="10" fill="#0000ff">Z</text><text x="597.500" y="264.600" font-family="Liberation Sans, sans-serif" font-weight="bold" font-size="6.500" fill="#00e000">Y</text><text x="606" y="284.200" font-family="Liberation Sans, sans-serif" font-size="10" fill="#ff0000">X</text><polygon points="1357.700,87.500 1397.900,80.800 1437,88.100 1394.400,97.600" fill="#fff" stroke="#222" stroke-width=".8" stroke-linejoin="round"/><polygon points="1357.700,87.500 1394.400,97.600 1394.900,159.200 1363.300,134.400" fill="#fff" stroke="#222" stroke-width=".8" stroke-linejoin="round"/><polygon points="1394.400,97.600 1437,88.100 1432,135.900 1394.900,159.200" fill="#fff" stroke="#222" stroke-width=".8" stroke-linejoin="round"/><text transform="matrix(1 -0.33 -0.06 2.900 1405 133.500)" font-family="Liberation Sans, sans-serif" font-style="italic" font-size="6.800" fill="#777">Справа</text><text transform="matrix(1 0.45 0.04 3.600 1365.600 123.200)" font-family="Liberation Sans, sans-serif" font-style="italic" font-size="5.400" fill="#c4c4c4">Спереди</text></svg>
<svg style="left:0px;top:0px" width="1826" height="798" viewBox="0 0 1826 798"><defs><filter id="sh" x="-20%" y="-5%" width="140%" height="110%"><feDropShadow dx="6" dy="3.200" stdDeviation="2" flood-color="#000" flood-opacity=".5"/></filter></defs><g filter="url(#sh)"><path d="M1766.300 28.500L1613.800 484" stroke="#c00000" stroke-width="3.500" fill="none"/><polygon points="1608.600,497.300 1606.300,481.100 1620.100,486.100" fill="#c00000"/></g></svg>
<svg style="left:471.5px;top:47px" width="37.44" height="37.44" viewBox="0 0 48 48"><path d="M10.400 14.500C19 14.500 20.500 20 23.300 23.700S30 31 38.800 31M10.400 31.300C19 31.300 20.500 27 23.300 23.300S30 14.200 38.800 14.200M31 9L39.200 14.100L31.200 20.200M31 26L39.200 31L31.200 37.300" fill="none" stroke="#3a9cbd" stroke-linecap="round" stroke-linejoin="round" stroke-width="1.900"/></svg>
</body>
</html>
